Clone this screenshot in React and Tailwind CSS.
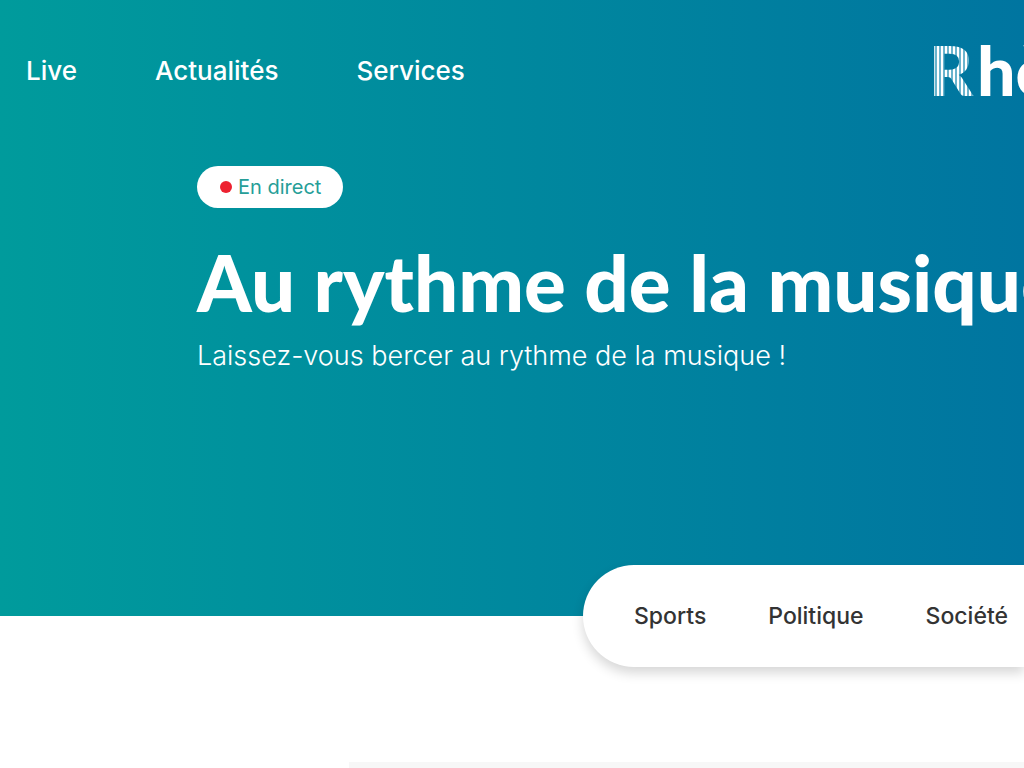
const mainLinks = ["Live", "Actualités", "Services"];
const topics = ["Sports", "Politique", "Société"];

function Logo() {
  return (
    <a href="#accueil" className="flex w-[91px] shrink-0 whitespace-nowrap font-[Lato,sans-serif] text-[68px] leading-[68px] font-black text-white">
      <span className="-ml-1 w-12 shrink-0 bg-[repeating-linear-gradient(90deg,#ffffff_0px,#ffffff_2px,#6ab4cd_2px,#6ab4cd_4px)] bg-clip-text text-transparent">R</span>
      <span>hè</span>
    </a>
  );
}

export default function App() {
  return (
    <div className="flex min-h-screen flex-col overflow-hidden bg-white font-[Inter,sans-serif]">
      <header className="bg-[linear-gradient(90deg,#009b9c_0%,#0075a0_100%)] text-white">
        <div className="flex h-[140px] items-center justify-between pl-[26px]">
          <nav aria-label="Principal" className="flex gap-[78px] text-[26px] font-medium">
            {mainLinks.map((label) => (
              <a key={label} href="#">{label}</a>
            ))}
          </nav>
          <Logo />
        </div>
        <section className="pt-[26px] pl-[197px] whitespace-nowrap">
          <p className="flex h-[42px] w-fit items-center gap-1.5 rounded-full bg-white pr-[22px] pl-[23px] text-[20px] text-[#269e98]">
            <span className="size-3 rounded-full bg-[#ed2130]" />
            En direct
          </p>
          <h1 className="mt-6 font-[Lato,sans-serif] text-[78px] leading-[100px] font-black">Au rythme de la musique</h1>
          <p className="mt-1.5 text-[27px] leading-9 font-light">Laissez-vous bercer au rythme de la musique !</p>
        </section>
        <div className="flex h-[242px] items-end justify-end">
          <nav aria-label="Rubriques" className="-mb-[51px] flex h-[102px] w-[441px] items-center gap-[62px] rounded-l-full bg-white pl-[51px] text-[23px] font-medium whitespace-nowrap text-[#333333] shadow-[0_6px_12px_rgba(0,0,0,0.16)]">
            {topics.map((label) => (
              <a key={label} href="#">{label}</a>
            ))}
          </nav>
        </div>
      </header>
      <main className="flex grow flex-col pt-[146px] pl-[349px]">
        <div className="grow bg-[#f7f7f7]" />
      </main>
    </div>
  );
}
